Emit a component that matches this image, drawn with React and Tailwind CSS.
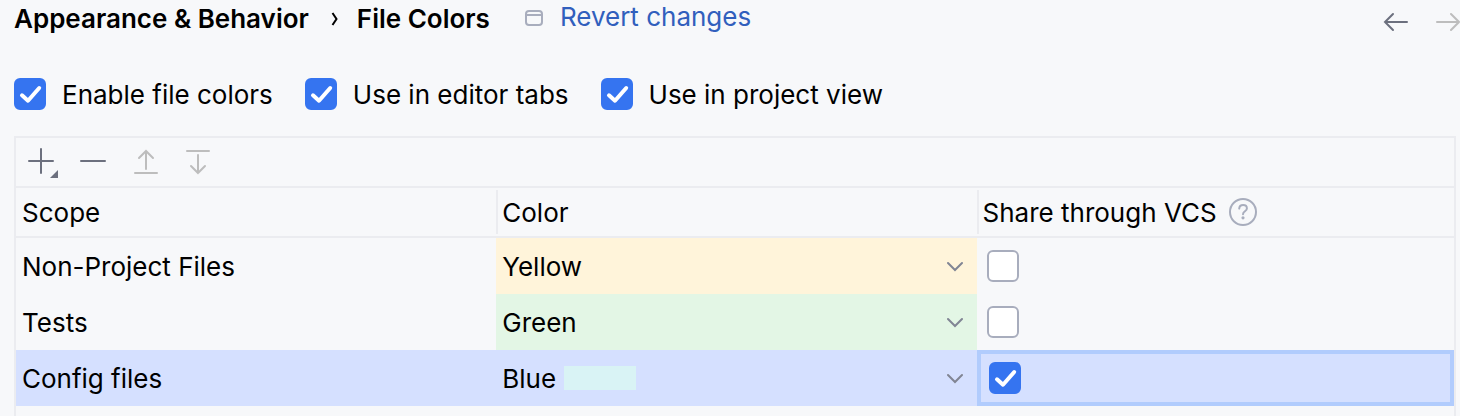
import { useState } from "react";

const initialScopes = [
  { name: "Non-Project Files", color: "Yellow", cell: "bg-[#fff4da]", shared: false },
  { name: "Tests", color: "Green", cell: "bg-[#e3f6e5]", shared: false },
  { name: "Config files", color: "Blue", swatch: "bg-[#d9f3f5]", shared: true },
];

const colorNames = ["Blue", "Gray", "Green", "Orange", "Rose", "Violet", "Yellow"];

function Icon({ size = 32, className = "", children }) {
  return (
    <svg
      width={size}
      height={size}
      viewBox={`0 0 ${size} ${size}`}
      fill="none"
      stroke="currentColor"
      strokeWidth="2"
      strokeLinecap="round"
      className={className}
      aria-hidden="true"
    >
      {children}
    </svg>
  );
}

function Checkbox({ id, checked, onChange, label }) {
  return (
    <span className="relative block size-8 shrink-0">
      <input
        id={id}
        type="checkbox"
        aria-label={label}
        checked={checked}
        onChange={onChange}
        className="block size-8 appearance-none rounded-md border-2 border-[#a8adbd] bg-white checked:border-[#3574f0] checked:bg-[#3574f0]"
      />
      {checked && (
        <svg
          viewBox="0 0 32 32"
          fill="none"
          stroke="white"
          strokeWidth="4"
          strokeLinecap="round"
          strokeLinejoin="round"
          className="pointer-events-none absolute inset-0"
          aria-hidden="true"
        >
          <path d="M8 17.3L14 22.7L25.2 10" />
        </svg>
      )}
    </span>
  );
}

function Option({ id, label }) {
  const [checked, setChecked] = useState(true);
  return (
    <div className="flex h-8 items-center gap-4">
      <Checkbox id={id} checked={checked} onChange={() => setChecked(!checked)} />
      <label htmlFor={id} className="pt-0.5">{label}</label>
    </div>
  );
}

function Header() {
  return (
    <header className="flex h-[38px] items-center pl-[14px]">
      <nav className="flex items-center font-semibold">
        <span>Appearance &amp; Behavior</span>
        <svg width="8" height="14" viewBox="0 0 8 14" fill="none" stroke="currentColor" strokeWidth="2" className="mr-[18px] ml-[22px]" aria-hidden="true">
          <path d="M1.5 1L5.5 7L1.5 13" />
        </svg>
        <h1>File Colors</h1>
      </nav>
      <Icon size={20} className="ml-[34px] text-[#a8adbd]">
        <rect x="2" y="2" width="16" height="14" rx="3" />
        <path d="M2 6H18" />
      </Icon>
      <a href="#revert" className="ml-4 pb-1 text-[#315fbd]">Revert changes</a>
      <div className="ml-auto flex gap-5 pt-1.5">
        <button aria-label="Back" className="text-[#6c707e]">
          <Icon>
            <path d="M27 16H5M13 8L5 16L13 24" />
          </Icon>
        </button>
        <button aria-label="Forward" disabled className="-mr-1 text-[#bdbdbd]">
          <Icon>
            <path d="M5 16H27M19 8L27 16L19 24" />
          </Icon>
        </button>
      </div>
    </header>
  );
}

function Toolbar() {
  return (
    <div className="flex h-[50px] items-center gap-5 border-b-2 border-[#ebecf0] pl-[10px] text-[#6c707e]">
      <button aria-label="Add">
        <Icon>
          <path d="M3 15H27M15 3V27" />
          <path d="M32 24V32H24Z" fill="currentColor" stroke="none" />
        </Icon>
      </button>
      <button aria-label="Remove">
        <Icon>
          <path d="M3 15H27" />
        </Icon>
      </button>
      <button aria-label="Move up" disabled className="text-[#bdbdbd]">
        <Icon>
          <path d="M5 27H27M16 23V5M9 12L16 5L23 12" />
        </Icon>
      </button>
      <button aria-label="Move down" disabled className="text-[#bdbdbd]">
        <Icon>
          <path d="M5 5H27M16 9V27M9 20L16 27L23 20" />
        </Icon>
      </button>
    </div>
  );
}

function ColorSelect({ scope, onChange }) {
  return (
    <div className="relative">
      <select
        aria-label={`Color for ${scope.name}`}
        value={scope.color}
        onChange={(e) => onChange(e.target.value)}
        className="block h-14 w-full appearance-none bg-transparent px-[6px] pt-0.5"
      >
        {colorNames.map((name) => (
          <option key={name}>{name}</option>
        ))}
      </select>
      {scope.swatch && (
        <span className={`pointer-events-none absolute top-4 left-[68px] h-6 w-[72px] ${scope.swatch}`} />
      )}
      <Icon size={16} className="pointer-events-none absolute top-5 right-[14px] text-[#818594]">
        <path d="M1 5L8 12L15 5" />
      </Icon>
    </div>
  );
}

function ScopeTable() {
  const [scopes, setScopes] = useState(initialScopes);
  const selected = "Config files";

  const update = (name, change) =>
    setScopes(scopes.map((s) => (s.name === name ? { ...s, ...change } : s)));

  return (
    <table className="w-full table-fixed text-left">
      <thead>
        <tr className="border-b-2 border-[#ebecf0]">
          <th className="w-[33.4%] p-0 font-normal">
            <div className="flex h-12 items-center pt-0.5 pl-[6px]">Scope</div>
          </th>
          <th className="w-[33.4%] p-0 font-normal">
            <div className="flex h-11 items-center border-l-2 border-[#ebecf0] pt-0.5 pl-1">Color</div>
          </th>
          <th className="p-0 font-normal">
            <div className="flex h-11 items-center gap-3 border-l-2 border-[#ebecf0] pl-1">
              <span className="pt-0.5">Share through VCS</span>
              <button aria-label="Help" className="text-[#a8adbd]">
                <Icon size={28}>
                  <circle cx="14" cy="14" r="13" />
                  <path d="M10.2 10.6C10.4 8.4 12 7.1 14.1 7.1C16.3 7.1 17.9 8.5 17.9 10.5C17.9 13.2 14 13.4 14 16.2" />
                  <circle cx="14" cy="19.8" r="1.6" fill="currentColor" stroke="none" />
                </Icon>
              </button>
            </div>
          </th>
        </tr>
      </thead>
      <tbody>
        {scopes.map((scope) => {
          const active = scope.name === selected;
          return (
            <tr key={scope.name} className={active ? "bg-[#d5e0ff]" : ""}>
              <td className="h-14 p-0 pt-0.5 pl-[6px]">{scope.name}</td>
              <td className={`p-0 ${scope.cell || ""}`}>
                <ColorSelect scope={scope} onChange={(color) => update(scope.name, { color })} />
              </td>
              <td className="p-0">
                <div
                  className={`flex h-14 items-center ${
                    active ? "border-4 border-[#b1ccfd] px-2" : "px-[10px]"
                  }`}
                >
                  <Checkbox
                    label={`Share ${scope.name} through VCS`}
                    checked={scope.shared}
                    onChange={() => update(scope.name, { shared: !scope.shared })}
                  />
                </div>
              </td>
            </tr>
          );
        })}
      </tbody>
    </table>
  );
}

export default function App() {
  return (
    <main className="flex min-h-screen flex-col bg-[#f7f8fa] font-[Inter,sans-serif] text-[26px] leading-8 text-black">
      <Header />
      <div className="mt-10 flex gap-8 pl-[14px]">
        <Option id="enable" label="Enable file colors" />
        <Option id="tabs" label="Use in editor tabs" />
        <Option id="project" label="Use in project view" />
      </div>
      <section className="mt-[26px] mr-1 ml-[14px] flex-1 border-2 border-b-0 border-[#ebecf0]">
        <Toolbar />
        <ScopeTable />
      </section>
    </main>
  );
}
